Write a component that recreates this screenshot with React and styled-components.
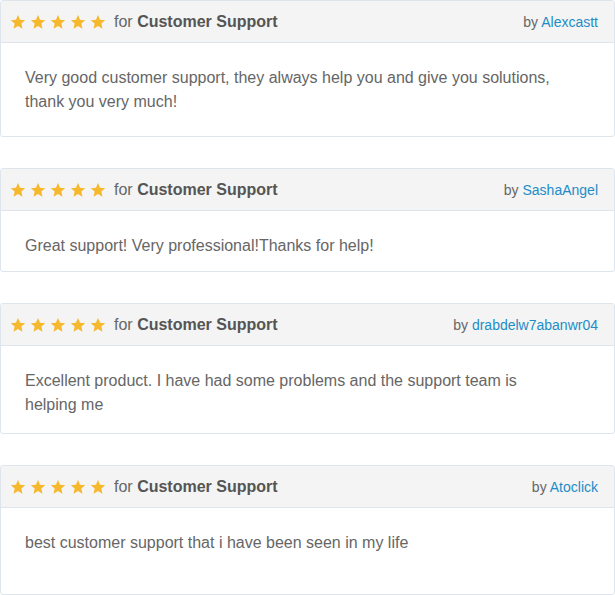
import React from 'react'
import styled, { createGlobalStyle } from 'styled-components'

const GlobalStyle = createGlobalStyle`
  body {
    margin: 0;
    background: #fff;
    font-family: "Liberation Sans", Arial, Helvetica, sans-serif;
  }
`

const List = styled.div`
  display: flex;
  flex-direction: column;
  gap: 31px;
  width: 615px;
`

const Card = styled.div`
  border: 1px solid #dfe5ec;
  border-radius: 3px;
  background: #fff;
  overflow: hidden;
`

const Header = styled.div`
  display: flex;
  align-items: center;
  justify-content: space-between;
  height: 41px;
  padding: 0 16px 0 9px;
  background: #f4f4f4;
  border-bottom: 1px solid #dfe5ec;
`

const Left = styled.div`
  display: flex;
  align-items: center;
`

const Stars = styled.div`
  display: flex;
  gap: 4px;
  margin-right: 8px;
`

const For = styled.span`
  font-size: 16px;
  color: #666;

  b {
    color: #555;
    font-weight: 700;
  }
`

const By = styled.span`
  font-size: 14px;
  color: #666;
`

const Author = styled.a`
  color: #1d8dc7;
  text-decoration: none;
`

const Body = styled.div`
  height: ${p => p.$height}px;
  box-sizing: border-box;
  padding: 23px 52px 0 24px;
  font-size: 16px;
  line-height: 24px;
  color: #666;
`

const Star = () => (
  <svg width="16" height="16" viewBox="0 0 24 24">
    <polygon
      fill="#f6b82c"
      points="12,1.5 15.1,8.6 22.8,9.3 17,14.4 18.7,22 12,18 5.3,22 7,14.4 1.2,9.3 8.9,8.6"
    />
  </svg>
)

const reviews = [
  {
    author: 'Alexcastt',
    text: 'Very good customer support, they always help you and give you solutions, thank you very much!',
    height: 93,
  },
  {
    author: 'SashaAngel',
    text: 'Great support! Very professional!Thanks for help!',
    height: 60,
  },
  {
    author: 'drabdelw7abanwr04',
    text: 'Excellent product. I have had some problems and the support team is helping me',
    height: 87,
  },
  {
    author: 'Atoclick',
    text: 'best customer support that i have been seen in my life',
    height: 86,
  },
]

const Review = ({ author, text, height }) => (
  <Card>
    <Header>
      <Left>
        <Stars>
          {[0, 1, 2, 3, 4].map(i => (
            <Star key={i} />
          ))}
        </Stars>
        <For>
          for <b>Customer Support</b>
        </For>
      </Left>
      <By>
        by <Author href="#">{author}</Author>
      </By>
    </Header>
    <Body $height={height}>{text}</Body>
  </Card>
)

export default function App() {
  return (
    <>
      <GlobalStyle />
      <List>
        {reviews.map(r => (
          <Review key={r.author} {...r} />
        ))}
      </List>
    </>
  )
}
